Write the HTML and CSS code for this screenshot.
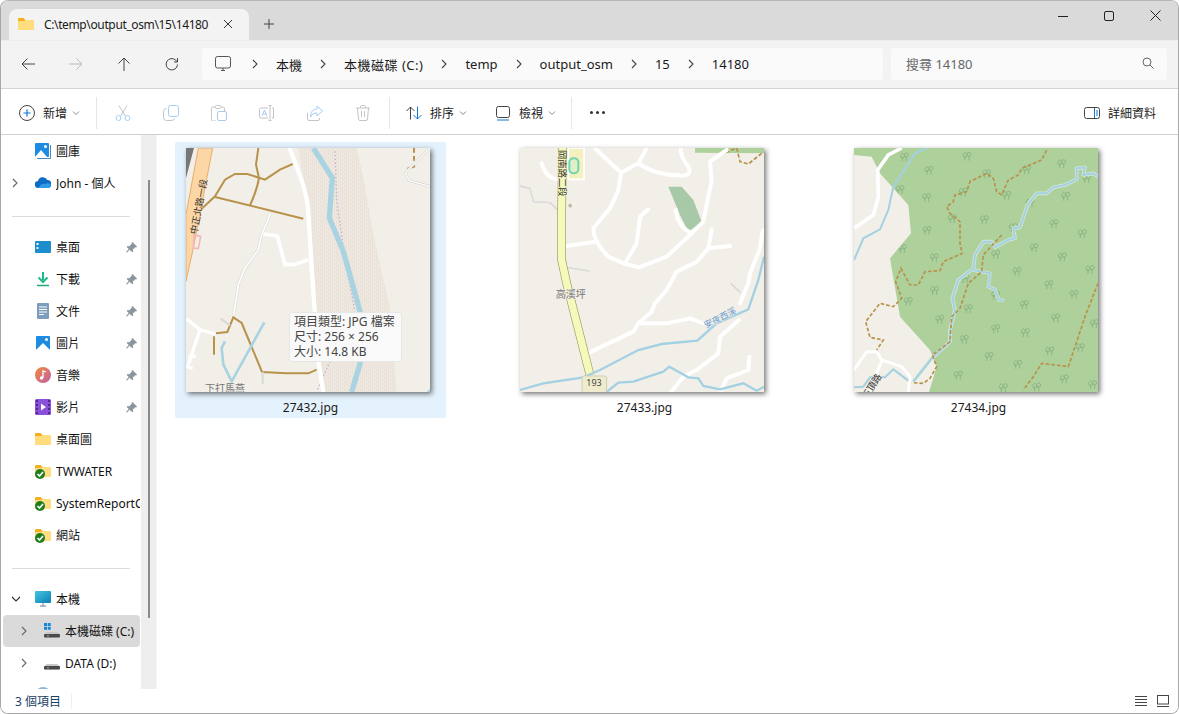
FILE: index.html
```html
<!DOCTYPE html>
<html lang="zh-Hant">
<head>
<meta charset="utf-8">
<title>C:\temp\output_osm\15\14180</title>
<link rel="stylesheet" href="styles.css">
</head>
<body>
<svg class="defs" width="0" height="0" aria-hidden="true">
  <defs>
    <symbol id="i-folder" viewBox="0 0 16 16">
      <path d="M0 3a1 1 0 0 1 1-1h4.500l2 2H15a1 1 0 0 1 1 1v8a1 1 0 0 1-1 1H1a1 1 0 0 1-1-1z" fill="#f2b01e"/>
      <path d="M0 6a1 1 0 0 1 1-1h5l1.500-1H15a1 1 0 0 1 1 1v8a1 1 0 0 1-1 1H1a1 1 0 0 1-1-1z" fill="#ffdc7d"/>
    </symbol>
    <symbol id="i-sync" viewBox="0 0 16 16">
      <use href="#i-folder"/>
      <circle cx="5" cy="11" r="5" fill="#1f7d1f"/>
      <path d="M2.500 11l2 2 3.500-4" fill="none" stroke="#fff" stroke-width="1.600"/>
    </symbol>
    <symbol id="i-pin" viewBox="0 0 12 12">
      <path d="M7 0l5 5-1 1-1-.3-2.500 2.500.3 2-1 1L4 8.500 1 11.500l-1-.5 3-3.500L.7 5.300l1-1 2 .3L6.300 2 6 1z" fill="#8c949c"/>
    </symbol>
    <symbol id="i-chev" viewBox="0 0 8 10">
      <path d="M2 1l4 4-4 4" fill="none" stroke="currentColor" stroke-width="1.100"/>
    </symbol>
    <symbol id="i-drive" viewBox="0 0 16 16">
      <path d="M3 9h10l3 2.500v2a1 1 0 0 1-1 1H1a1 1 0 0 1-1-1v-2z" fill="#c8c8c8"/>
      <rect y="11" width="16" height="3.500" rx="1" fill="#4a4a4a"/>
      <rect x="3" y="12.300" width="2" height="1" fill="#5fdc6a"/>
    </symbol>
    <symbol id="i-tree" viewBox="0 0 30 30">
      <g fill="none" stroke="#86b182" stroke-width="2.600">
        <path d="M9 28V14M21 28V14"/>
        <path d="M9 3C5 6 3 10 3 12a6 6 0 0 0 12 0c0-2-2-6-6-9z"/>
        <circle cx="21" cy="9" r="6"/>
      </g>
    </symbol>
    <pattern id="stipple" width="12" height="12" patternUnits="userSpaceOnUse">
      <circle cx="2" cy="3" r="1.500" fill="#d3c5b6"/>
      <circle cx="8" cy="9" r="1.500" fill="#d3c5b6"/>
    </pattern>
  </defs>
</svg>

<div class="window">
  <header class="titlebar">
    <div class="tab">
      <svg class="ico" width="16" height="16"><use href="#i-folder"/></svg>
      <span class="tab-title">C:\temp\output_osm\15\14180</span>
      <svg class="tab-close" width="10" height="10" viewBox="0 0 10 10"><path d="M1 1l8 8M9 1l-8 8" stroke="#333" fill="none"/></svg>
    </div>
    <svg class="tab-new" width="12" height="12" viewBox="0 0 12 12"><path d="M6 1v10M1 6h10" stroke="#444" fill="none"/></svg>
    <div class="winctl">
      <span class="winbtn"><svg width="10" height="10" viewBox="0 0 10 10"><path d="M0 5.500h10" stroke="#222" fill="none"/></svg></span>
      <span class="winbtn"><svg width="10" height="10" viewBox="0 0 10 10"><rect x=".5" y=".5" width="9" height="9" rx="1.500" stroke="#222" fill="none"/></svg></span>
      <span class="winbtn"><svg width="11" height="11" viewBox="0 0 11 11"><path d="M.5.500l10 10M10.500.5l-10 10" stroke="#222" fill="none"/></svg></span>
    </div>
  </header>

  <div class="addrrow">
    <div class="navbtns">
      <span class="navbtn"><svg width="16" height="16" viewBox="0 0 16 16"><path d="M15 8H2M7.500 2.500L2 8l5.500 5.500" fill="none" stroke="#444"/></svg></span>
      <span class="navbtn"><svg width="16" height="16" viewBox="0 0 16 16"><path d="M1 8h13M8.500 2.500L14 8l-5.500 5.500" fill="none" stroke="#bbb"/></svg></span>
      <span class="navbtn"><svg width="16" height="16" viewBox="0 0 16 16"><path d="M8 15V2M2.500 7.500L8 2l5.500 5.500" fill="none" stroke="#444"/></svg></span>
      <span class="navbtn"><svg width="16" height="16" viewBox="0 0 16 16"><path d="M13.500 8.500a5.700 5.700 0 1 1-1.700-4.300L13.500 6V2M13.500 6H10" fill="none" stroke="#444"/></svg></span>
    </div>
    <div class="address">
      <svg class="pc" width="16" height="16" viewBox="0 0 16 16"><rect x=".5" y=".5" width="15" height="11.500" rx="2" fill="none" stroke="#555"/><path d="M6 14.500h4M8 12v2.500" stroke="#555" fill="none"/></svg>
      <svg class="chev" width="8" height="10"><use href="#i-chev"/></svg><span>本機</span>
      <svg class="chev" width="8" height="10"><use href="#i-chev"/></svg><span class="crumb-wide">本機磁碟 (C:)</span>
      <svg class="chev" width="8" height="10"><use href="#i-chev"/></svg><span>temp</span>
      <svg class="chev" width="8" height="10"><use href="#i-chev"/></svg><span>output_osm</span>
      <svg class="chev" width="8" height="10"><use href="#i-chev"/></svg><span>15</span>
      <svg class="chev" width="8" height="10"><use href="#i-chev"/></svg><span>14180</span>
    </div>
    <div class="search">
      <span>搜尋 14180</span>
      <svg width="12" height="12" viewBox="0 0 12 12"><circle cx="5" cy="5" r="4" fill="none" stroke="#666"/><path d="M8 8l3.500 3.500" stroke="#666" fill="none"/></svg>
    </div>
  </div>

  <div class="toolbar">
    <div class="tool tool-new">
      <svg width="16" height="16" viewBox="0 0 16 16"><circle cx="8" cy="8" r="7.500" fill="none" stroke="#444"/><path d="M8 4.500v7M4.500 8h7" stroke="#0a78d4" stroke-width="1.200" fill="none"/></svg>
      <span>新增</span>
      <svg class="caret" width="8" height="6" viewBox="0 0 8 6"><path d="M1 1.500l3 3 3-3" fill="none" stroke="#888"/></svg>
    </div>
    <span class="sep"></span>
    <div class="disabled">
      <span class="dbtn"><svg width="16" height="16" viewBox="0 0 16 16"><path d="M4 .5l6.500 11M12 .5L5.500 11.500" stroke="#c4c4c4" fill="none"/><circle cx="3.500" cy="13" r="2.500" stroke="#a5cdf2" fill="none"/><circle cx="12.500" cy="13" r="2.500" stroke="#a5cdf2" fill="none"/></svg></span>
      <span class="dbtn"><svg width="16" height="16" viewBox="0 0 16 16"><rect x="5.500" y=".5" width="10" height="11" rx="2" fill="#fff" stroke="#a5cdf2"/><path d="M3.500 3.500A3 3 0 0 0 .5 6.500v6a3 3 0 0 0 3 3h5a3 3 0 0 0 3-2" fill="none" stroke="#c4c4c4"/></svg></span>
      <span class="dbtn"><svg width="16" height="16" viewBox="0 0 16 16"><path d="M4 2H2a1.500 1.500 0 0 0-1.500 1.500v11A1.500 1.500 0 0 0 2 16h3M10 2h2a1.500 1.500 0 0 1 1.500 1.500V6" fill="none" stroke="#c4c4c4"/><rect x="4.500" y=".5" width="5" height="3" rx="1" fill="none" stroke="#c4c4c4"/><rect x="6.500" y="6.500" width="9" height="9" rx="1.500" fill="#fff" stroke="#a5cdf2"/></svg></span>
      <span class="dbtn"><svg width="16" height="16" viewBox="0 0 16 16"><path d="M9 3H2a1.500 1.500 0 0 0-1.500 1.500v7A1.500 1.500 0 0 0 2 13h7M13 3h1.500v10H13M11 1v14M9.500.5h3M9.500 15.500h3" fill="none" stroke="#c4c4c4"/><path d="M3 11l2.500-6 2.500 6M4 9h3" fill="none" stroke="#a5cdf2"/></svg></span>
      <span class="dbtn"><svg width="16" height="16" viewBox="0 0 16 16"><path d="M.5 8v6A1.500 1.500 0 0 0 2 15.500h9a1.500 1.500 0 0 0 1.500-1.500v-1" fill="none" stroke="#c4c4c4"/><path d="M10 1l5.500 5L10 11V8C7 8 5 9 3.500 12 3.500 7 6 4 10 4z" fill="#fff" stroke="#a5cdf2"/></svg></span>
      <span class="dbtn"><svg width="16" height="16" viewBox="0 0 16 16"><path d="M1 3h14M5.500 3V1.500a1 1 0 0 1 1-1h3a1 1 0 0 1 1 1V3M2.500 3l1 11a1.500 1.500 0 0 0 1.500 1.500h6a1.500 1.500 0 0 0 1.500-1.500l1-11M6.500 6v6M9.500 6v6" fill="none" stroke="#c4c4c4"/></svg></span>
    </div>
    <span class="sep sep-b"></span>
    <div class="tool tool-sort">
      <svg width="16" height="16" viewBox="0 0 16 16"><path d="M4.500 14.500V2M.5 6l4-4 4 4" fill="none" stroke="#444"/><path d="M11.500 1.500V14M7.500 10l4 4 4-4" fill="none" stroke="#0a78d4"/></svg>
      <span>排序</span>
      <svg class="caret" width="8" height="6" viewBox="0 0 8 6"><path d="M1 1.500l3 3 3-3" fill="none" stroke="#888"/></svg>
    </div>
    <div class="tool tool-view">
      <svg width="16" height="16" viewBox="0 0 16 16"><rect x="1.500" y="1.500" width="13" height="11" rx="2" fill="none" stroke="#444"/><path d="M2 15h12" stroke="#0a78d4" fill="none"/></svg>
      <span>檢視</span>
      <svg class="caret" width="8" height="6" viewBox="0 0 8 6"><path d="M1 1.500l3 3 3-3" fill="none" stroke="#888"/></svg>
    </div>
    <span class="sep sep-c"></span>
    <div class="more"><i></i><i></i><i></i></div>
    <div class="tool tool-details">
      <svg width="16" height="16" viewBox="0 0 16 16"><rect x=".5" y="2.500" width="15" height="11" rx="2" fill="none" stroke="#444"/><path d="M10.500 3v10" stroke="#0a78d4" fill="none"/><path d="M12 6h2M12 8h2M12 10h2" stroke="#0a78d4" fill="none"/></svg>
      <span>詳細資料</span>
    </div>
  </div>

  <div class="main">
    <nav class="nav">
      <div class="row"><span class="ch"></span>
        <svg class="ico" width="16" height="16" viewBox="0 0 16 16"><rect width="14" height="14" rx="1" fill="#1d8be0"/><path d="M0 14l6-7 6 7z" fill="#fff"/><circle cx="10.500" cy="3.500" r="1.500" fill="#fff"/><path d="M15.500 2v13.500H2" fill="none" stroke="#4a86c0"/></svg>
        <span class="t">圖庫</span></div>
      <div class="row"><span class="ch"><svg width="8" height="10"><use href="#i-chev"/></svg></span>
        <svg class="ico" width="16" height="16" viewBox="0 0 16 16"><path d="M3.500 13a3.500 3.500 0 0 1-.5-7 5 5 0 0 1 9.300-1A4 4 0 0 1 12.500 13z" fill="#0f6cc4"/><path d="M3.500 13C5 9 8 8.500 10 9c3-1.500 6-.5 6 1.500 0 1.500-1.500 2.500-3.500 2.500z" fill="#2f9ae6"/></svg>
        <span class="t">John - 個人</span></div>
      <div class="divider"></div>
      <div class="row"><span class="ch"></span>
        <svg class="ico" width="16" height="16" viewBox="0 0 16 16"><rect y="2" width="16" height="12" rx="1" fill="#1b8ecb"/><rect x="1.500" y="4" width="2" height="2" fill="#fff"/><rect x="1.500" y="8" width="2" height="2" fill="#d8f2ff"/></svg>
        <span class="t">桌面</span><svg class="pin" width="11" height="11"><use href="#i-pin"/></svg></div>
      <div class="row"><span class="ch"></span>
        <svg class="ico" width="16" height="16" viewBox="0 0 16 16"><path d="M8 1v8" stroke="#1fb78d" stroke-width="2" fill="none"/><path d="M3.500 6.500L8 11l4.500-4.500" stroke="#1fb78d" stroke-width="2" fill="none"/><path d="M2 14.500h12" stroke="#1fa87e" stroke-width="1.500" fill="none"/></svg>
        <span class="t">下載</span><svg class="pin" width="11" height="11"><use href="#i-pin"/></svg></div>
      <div class="row"><span class="ch"></span>
        <svg class="ico" width="16" height="16" viewBox="0 0 16 16"><rect x="2" width="12" height="16" rx="1" fill="#7d9dbd"/><path d="M4 4h8M4 6.500h8M4 9h8M4 11.500h5" stroke="#fff" fill="none"/></svg>
        <span class="t">文件</span><svg class="pin" width="11" height="11"><use href="#i-pin"/></svg></div>
      <div class="row"><span class="ch"></span>
        <svg class="ico" width="16" height="16" viewBox="0 0 16 16"><rect x="1" y="1" width="14" height="14" rx="1" fill="#1d8be0"/><path d="M1 15l7-7 7 7z" fill="#fff"/><circle cx="11.500" cy="4.500" r="1.500" fill="#fff"/></svg>
        <span class="t">圖片</span><svg class="pin" width="11" height="11"><use href="#i-pin"/></svg></div>
      <div class="row"><span class="ch"></span>
        <svg class="ico" width="16" height="16" viewBox="0 0 16 16"><defs><linearGradient id="g-music" x1="0" y1="0" x2="1" y2="1"><stop offset="0" stop-color="#ef8a3c"/><stop offset="1" stop-color="#c25fa8"/></linearGradient></defs><circle cx="8" cy="8" r="8" fill="url(#g-music)"/><path d="M8 11V4l3 1" fill="none" stroke="#fff" stroke-width="1.300"/><circle cx="6.500" cy="11" r="1.700" fill="#fff"/></svg>
        <span class="t">音樂</span><svg class="pin" width="11" height="11"><use href="#i-pin"/></svg></div>
      <div class="row"><span class="ch"></span>
        <svg class="ico" width="16" height="16" viewBox="0 0 16 16"><rect width="16" height="16" rx="1.500" fill="#8b4fd8"/><path d="M6 4.500l5 3.500-5 3.500z" fill="#fff"/><path d="M1 2h2M1 6h2M1 10h2M1 14h2M13 2h2M13 6h2M13 10h2M13 14h2" stroke="#3d1d80" stroke-width="1.400" fill="none"/></svg>
        <span class="t">影片</span><svg class="pin" width="11" height="11"><use href="#i-pin"/></svg></div>
      <div class="row"><span class="ch"></span><svg class="ico" width="16" height="16"><use href="#i-folder"/></svg><span class="t">桌面圖</span></div>
      <div class="row"><span class="ch"></span><svg class="ico" width="16" height="16"><use href="#i-sync"/></svg><span class="t">TWWATER</span></div>
      <div class="row"><span class="ch"></span><svg class="ico" width="16" height="16"><use href="#i-sync"/></svg><span class="t">SystemReportCache</span></div>
      <div class="row"><span class="ch"></span><svg class="ico" width="16" height="16"><use href="#i-sync"/></svg><span class="t">網站</span></div>
      <div class="divider"></div>
      <div class="row"><span class="ch"><svg width="10" height="8" viewBox="0 0 10 8"><path d="M1 2l4 4 4-4" fill="none" stroke="#333" stroke-width="1.100"/></svg></span>
        <svg class="ico" width="16" height="16" viewBox="0 0 16 16"><defs><linearGradient id="g-pc" x1="0" y1="0" x2="1" y2="1"><stop offset="0" stop-color="#40c6e0"/><stop offset="1" stop-color="#0f7fb8"/></linearGradient></defs><rect width="16" height="12" rx="1" fill="url(#g-pc)"/><path d="M8 12v2.500M5 15h6" stroke="#9aa5ad" stroke-width="1.300" fill="none"/></svg>
        <span class="t">本機</span></div>
      <div class="row row-sub row-sel"><span class="ch"><svg width="8" height="10"><use href="#i-chev"/></svg></span>
        <svg class="ico" width="16" height="16" viewBox="0 0 16 16"><use href="#i-drive"/><path d="M0 0h3v3H0zM3.700 0h3v3h-3zM0 3.700h3v3H0zM3.700 3.700h3v3h-3z" fill="#1688d8"/></svg>
        <span class="t">本機磁碟 (C:)</span></div>
      <div class="row row-sub"><span class="ch"><svg width="8" height="10"><use href="#i-chev"/></svg></span>
        <svg class="ico" width="16" height="16"><use href="#i-drive"/></svg>
        <span class="t">DATA (D:)</span></div>
      <div class="row"><span class="ch"></span>
        <svg class="ico" width="16" height="16" viewBox="0 0 16 16"><circle cx="8" cy="8" r="8" fill="#8ab8d8"/></svg>
      </div>
    </nav>
    <div class="track"><div class="thumbbar"></div></div>

    <section class="files">
      <figure class="item item-sel">
        <svg class="map" viewBox="48 40 732 732" width="244" height="244">
          <rect x="48" y="40" width="732" height="732" fill="#f2efe9"/>
          <path d="M385 40H560L580 130 610 300 660 520 680 772H465L445 620 430 400 410 200z" fill="#eee8e0"/>
          <path d="M385 40H560L580 130 610 300 660 520 680 772H465L445 620 430 400 410 200z" fill="url(#stipple)"/>
          <path d="M495 50L500 200 530 400 555 530M480 680L440 770" fill="none" stroke="#c8aacb" stroke-width="4" stroke-dasharray="4 7"/>
          <path d="M430 40L487 130 478 250 520 350 570 530 572 680 545 772" fill="none" stroke="#a9d3e0" stroke-width="16"/>
          <path d="M358 40C390 120 410 170 415 230L425 400 435 540 445 680 460 772" fill="none" stroke="#fff" stroke-width="13"/>
          <path d="M48 40H72L48 130z" fill="#777"/>
          <path d="M85 40H128L70 340 48 440V240z" fill="#fcd6a4" stroke="#e6ad6e" stroke-width="3"/>
          <path d="M72 300L92 305 85 342 70 340z" fill="none" stroke="#f5b9b9" stroke-width="5"/>
          <path d="M302 235L275 300 265 345 225 400 205 450 190 545" fill="none" stroke="#dcdcdc" stroke-width="9"/>
          <path d="M302 235L275 300 265 345 225 400 205 450 190 545" fill="none" stroke="#fff" stroke-width="5"/>
          <path d="M280 298L322 304 345 390 370 390 415 375" fill="none" stroke="#fff" stroke-width="11"/>
          <g fill="none" stroke="#b8924a" stroke-width="6">
            <path d="M265 40L258 90 267 130C262 160 250 190 240 212"/>
            <path d="M95 222L135 185 165 135 195 118 232 118 285 135 330 105 368 88"/>
            <path d="M135 187L400 252"/>
            <path d="M138 596L172 592 190 548 215 565 240 625 276 712 350 716 415 716 440 705"/>
            <path d="M132 605V660"/>
            <path d="M712 102L735 95"/>
            <path d="M732 40V95" stroke-dasharray="14 10"/>
          </g>
          <path d="M48 552L90 585 135 598M90 585L55 690M55 665H78M48 695L68 702" fill="none" stroke="#fff" stroke-width="10"/>
          <path d="M152 552L180 572M278 712V748" fill="none" stroke="#d8d8d8" stroke-width="6"/>
          <path d="M780 40L705 115 718 138 780 155" fill="none" stroke="#cfcfcf" stroke-width="7"/>
          <path d="M780 40L705 115 718 138 780 155" fill="none" stroke="#fff" stroke-width="4"/>
          <path d="M283 563L185 740 160 690 155 640 165 620" fill="none" stroke="#a9d3e0" stroke-width="8"/>
          <path d="M770 772L780 762V772z" fill="#a9d3e0"/>
          <text class="m-road m-orange" transform="translate(80 300) rotate(-79)">中正北路一段</text>
          <text class="m-place" x="105" y="773">下打馬燕</text>
        </svg>
        <figcaption>27432.jpg</figcaption>
        <div class="tip">項目類型: JPG 檔案<br>尺寸: 256 × 256<br>大小: 14.8 KB</div>
      </figure>

      <figure class="item">
        <svg class="map" viewBox="30 24 732 732" width="244" height="244">
          <rect x="30" y="24" width="732" height="732" fill="#f2efe9"/>
          <path d="M555 24H762V40L555 38z" fill="#aed09b"/>
          <path d="M630 45L680 24 690 65 715 72 755 40" fill="none" stroke="#b8924a" stroke-width="5" stroke-dasharray="12 6"/>
          <path d="M475 140H515L550 180 575 245 535 275 510 225z" fill="#a8c9a8"/>
          <path d="M175 24H222V118H175z" fill="#f4f0c0" stroke="#fff" stroke-width="5"/>
          <rect x="178" y="55" width="27" height="45" rx="12" fill="#dff0c8" stroke="#72d3ae" stroke-width="6"/>
          <g fill="none" stroke="#fff" stroke-width="12" stroke-linejoin="round" stroke-linecap="round">
            <path d="M95 70C105 105 125 118 150 118"/>
            <path d="M255 24C280 50 310 75 333 98L385 70 410 24"/>
            <path d="M385 70C420 95 470 108 505 105 520 110 550 105 535 80 522 65 512 50 512 24"/>
            <path d="M333 98L325 150 300 205 250 265C250 290 265 320 295 350L340 370 387 382 470 350 545 280 580 245 605 120 600 65 650 30"/>
            <path d="M170 318L255 305"/>
            <path d="M345 370L380 310 390 230 415 208"/>
            <path d="M498 210C500 240 515 265 545 280"/>
            <path d="M605 268L595 325 660 318M595 325L560 365 500 395 470 450 435 490 425 515 385 550 370 575 232 640"/>
            <path d="M385 550L470 550 540 535 580 550"/>
            <path d="M760 270C750 290 760 310 740 350L720 400 715 430 690 490"/>
            <path d="M687 540L630 590 625 640 560 690 520 710 480 760"/>
            <path d="M718 650L715 690 650 715 630 760"/>
          </g>
          <path d="M30 138L60 145 70 185 120 188 150 215M170 382L238 393M662 430L692 458" fill="none" stroke="#c8c8c8" stroke-width="4"/>
          <path d="M30 138L60 145 70 185 120 188 150 215M170 382L238 393M662 430L692 458" fill="none" stroke="#f7f7f7" stroke-width="1.500"/>
          <path d="M158 24L155 200 155 360 170 430 240 705" fill="none" stroke="#9c9c60" stroke-width="26"/>
          <path d="M158 24L155 200 155 360 170 430 240 705" fill="none" stroke="#f6f9bc" stroke-width="22"/>
          <path d="M30 750L100 730 220 712 270 690 385 630 455 612 562 602 620 550 715 508 745 420 762 350" fill="none" stroke="#a3d1e2" stroke-width="7"/>
          <path d="M290 756L325 728 370 725 460 695 478 680 535 712 565 715 580 738 630 748 700 730 740 752 762 740" fill="none" stroke="#a3d1e2" stroke-width="7"/>
          <path d="M180 190l7 7-6 7-7-7z" fill="#c4b3a0"/>
          <rect x="216" y="708" width="74" height="50" rx="7" fill="#efeccd" stroke="#cfcfb0" stroke-width="3"/>
          <text class="m-shield" x="252" y="731">193</text>
          <text class="m-road m-yellow" transform="translate(147 30) rotate(90)">岡南路二段</text>
          <text class="m-place" x="137" y="475">高溪坪</text>
          <text class="m-water" transform="translate(588 565) rotate(-27)">安夜西溪</text>
        </svg>
        <figcaption>27433.jpg</figcaption>
      </figure>

      <figure class="item">
        <svg class="map" viewBox="27 24 732 732" width="244" height="244">
          <rect x="27" y="24" width="732" height="732" fill="#aed09b"/>
          <g>
            <use href="#i-tree" x="163" y="36" width="30" height="30"/><use href="#i-tree" x="351" y="34" width="30" height="30"/><use href="#i-tree" x="635" y="56" width="30" height="30"/>
            <use href="#i-tree" x="237" y="76" width="30" height="30"/><use href="#i-tree" x="410" y="86" width="30" height="30"/><use href="#i-tree" x="530" y="74" width="30" height="30"/>
            <use href="#i-tree" x="710" y="101" width="30" height="30"/><use href="#i-tree" x="150" y="134" width="30" height="30"/><use href="#i-tree" x="340" y="141" width="30" height="30"/>
            <use href="#i-tree" x="230" y="158" width="30" height="30"/><use href="#i-tree" x="647" y="154" width="30" height="30"/><use href="#i-tree" x="470" y="151" width="30" height="30"/>
            <use href="#i-tree" x="540" y="174" width="30" height="30"/><use href="#i-tree" x="307" y="221" width="30" height="30"/><use href="#i-tree" x="403" y="224" width="30" height="30"/>
            <use href="#i-tree" x="231" y="256" width="30" height="30"/><use href="#i-tree" x="612" y="236" width="30" height="30"/><use href="#i-tree" x="490" y="248" width="30" height="30"/>
            <use href="#i-tree" x="697" y="266" width="30" height="30"/><use href="#i-tree" x="157" y="311" width="30" height="30"/><use href="#i-tree" x="552" y="308" width="30" height="30"/>
            <use href="#i-tree" x="253" y="338" width="30" height="30"/><use href="#i-tree" x="437" y="328" width="30" height="30"/><use href="#i-tree" x="637" y="336" width="30" height="30"/>
            <use href="#i-tree" x="501" y="379" width="30" height="30"/><use href="#i-tree" x="720" y="374" width="30" height="30"/><use href="#i-tree" x="345" y="401" width="30" height="30"/>
            <use href="#i-tree" x="597" y="419" width="30" height="30"/><use href="#i-tree" x="254" y="436" width="30" height="30"/><use href="#i-tree" x="437" y="451" width="30" height="30"/>
            <use href="#i-tree" x="672" y="448" width="30" height="30"/><use href="#i-tree" x="175" y="469" width="30" height="30"/><use href="#i-tree" x="523" y="479" width="30" height="30"/>
            <use href="#i-tree" x="355" y="491" width="30" height="30"/><use href="#i-tree" x="617" y="519" width="30" height="30"/><use href="#i-tree" x="269" y="523" width="30" height="30"/>
            <use href="#i-tree" x="437" y="551" width="30" height="30"/><use href="#i-tree" x="733" y="536" width="30" height="30"/><use href="#i-tree" x="526" y="563" width="30" height="30"/>
            <use href="#i-tree" x="343" y="583" width="30" height="30"/><use href="#i-tree" x="599" y="618" width="30" height="30"/><use href="#i-tree" x="691" y="608" width="30" height="30"/>
            <use href="#i-tree" x="417" y="634" width="30" height="30"/><use href="#i-tree" x="503" y="658" width="30" height="30"/><use href="#i-tree" x="325" y="691" width="30" height="30"/>
            <use href="#i-tree" x="643" y="702" width="30" height="30"/><use href="#i-tree" x="560" y="726" width="30" height="30"/><use href="#i-tree" x="460" y="728" width="30" height="30"/>
            <use href="#i-tree" x="728" y="719" width="30" height="30"/>
          </g>
          <path d="M27 45L80 50 105 100 190 195 198 280 135 355 165 530 255 630 275 680 252 756H27z" fill="#f2efe9"/>
          <path d="M27 265L85 225 100 170 98 90 130 45 170 24" fill="none" stroke="#fff" stroke-width="11"/>
          <path d="M27 360L55 295 105 268 130 210 145 140 210 40 245 24" fill="none" stroke="#a3d1e2" stroke-width="6"/>
          <path d="M27 690L65 635 95 635 110 660 170 680 195 710 190 756M110 665L85 720 75 756" fill="none" stroke="#fff" stroke-width="9"/>
          <g fill="none" stroke-linejoin="round">
            <path d="M205 725L260 655 315 605 315 570 330 510 322 475 340 420 385 385 390 345 415 305 440 305 450 322 490 300 510 295 505 265 525 262 548 195 575 160 605 160 625 142 660 135 695 118 695 85 720 82 715 105 745 100 759 110" stroke="#d4e6d8" stroke-width="11"/>
            <path d="M385 390L435 400 430 440 450 448 462 480 478 482" stroke="#d4e6d8" stroke-width="10"/>
            <path d="M205 725L260 655 315 605 315 570 330 510 322 475 340 420 385 385 390 345 415 305 440 305 450 322 490 300 510 295 505 265 525 262 548 195 575 160 605 160 625 142 660 135 695 118 695 85 720 82 715 105 745 100 759 110" stroke="#a3d1e2" stroke-width="6"/>
            <path d="M385 390L435 400 430 440 450 448 462 480 478 482" stroke="#a3d1e2" stroke-width="6"/>
            <path d="M27 742L55 740 75 712 120 712 145 688 190 722" stroke="#a3d1e2" stroke-width="6"/>
          </g>
          <g fill="none" stroke="#b8924a" stroke-width="5" stroke-dasharray="11 6">
            <path d="M605 30L590 60 530 85 520 105 490 120 470 165 455 155 445 115 425 100 375 125 365 155 330 165 325 185 305 200 315 220 345 245 345 310 352 340 295 365 285 392 240 395 220 435 195 435 168 385 152 425 170 475 145 500 105 490 62 545 75 592 115 600 95 630"/>
            <path d="M470 285L415 345 410 395 370 430 345 505 320 530 315 605 262 645 275 680 255 715 235 730 200 728"/>
            <path d="M759 430L720 530 670 680 590 670 565 710 535 750"/>
          </g>
          <text class="m-road" transform="translate(66 780) rotate(-58)">石頂路</text>
        </svg>
        <figcaption>27434.jpg</figcaption>
      </figure>
    </section>
  </div>

  <footer class="status">
    <span class="count">3 個項目</span>
    <span class="status-sep"></span>
    <div class="viewbtns">
      <svg width="12" height="11" viewBox="0 0 12 11"><path d="M0 .5h12M0 3.500h12M0 6.500h12M0 9.500h12" stroke="#444" fill="none"/></svg>
      <svg width="12" height="12" viewBox="0 0 12 12"><rect x=".5" y=".5" width="11" height="8.500" fill="none" stroke="#444"/><path d="M0 11.500h12" stroke="#444" fill="none"/></svg>
    </div>
  </footer>
</div>
</body>
</html>
```

FILE: styles.css
```css
* { box-sizing: border-box; }
html, body { margin: 0; height: 100%; background: #fff; overflow: hidden; }
body {
  font-family: "Noto Sans", "Noto Sans CJK TC", sans-serif;
  font-size: 12px;
  color: #1a1a1a;
}
.defs { position: absolute; }
svg { display: block; flex: none; }

.window {
  width: 1179px;
  height: 714px;
  display: flex;
  flex-direction: column;
  background: #fff;
  border: 1px solid #a8a8a8;
  border-top-color: #b5b5b5;
  border-radius: 8px;
  overflow: hidden;
}

.titlebar {
  height: 39px;
  flex: none;
  display: flex;
  align-items: flex-end;
  background: #dadada;
  padding-left: 8px;
}
.tab {
  width: 240px;
  height: 31px;
  background: #f3f3f3;
  border-radius: 8px 8px 0 0;
  display: flex;
  align-items: center;
  padding-left: 9px;
  padding-bottom: 1px;
}
.tab-title { margin-left: 10px; width: 164px; white-space: nowrap; letter-spacing: -.37px; }
.tab-close { margin-left: 15px; }
.tab-new { margin: 0 0 10px 14px; }
.winctl { margin-left: auto; display: flex; align-self: stretch; align-items: center; }
.winbtn { width: 46px; display: flex; justify-content: center; margin-top: -10px; }

.addrrow {
  height: 49px;
  flex: none;
  display: flex;
  align-items: center;
  background: #f3f3f3;
  border-bottom: 1px solid #d4d4d4;
  padding: 0 11px 1px 3px;
  border-top: 1px solid #ececec;
}
.navbtns { display: flex; }
.navbtn { width: 48px; display: flex; justify-content: center; }
.address {
  margin-left: 6px;
  width: 681px;
  height: 32px;
  background: #fafafa;
  border-radius: 4px;
  display: flex;
  align-items: center;
  gap: 17px;
  padding-left: 13px;
  font-size: 13px;
  white-space: nowrap;
}
.pc { margin-right: 3px; }
.crumb-wide { letter-spacing: .5px; }
.chev { color: #444; }
.search {
  margin-left: 8px;
  width: 276px;
  height: 32px;
  background: #fafafa;
  border-radius: 4px;
  display: flex;
  align-items: center;
  justify-content: space-between;
  padding: 0 13px 2px 15px;
  font-size: 13px;
  color: #666;
}

.toolbar {
  height: 46px;
  flex: none;
  display: flex;
  align-items: center;
  padding: 2px 0 0 7px;
  border-bottom: 1px solid #cfcfcf;
  background: #fff;
}
.tool { display: flex; align-items: center; gap: 8px; height: 32px; }
.caret { margin-left: -3px; }
.tool-new { width: 80px; padding-left: 11px; }
.sep { width: 1px; height: 32px; background: #e6e6e6; margin-left: 8px; flex: none; }
.disabled { display: flex; margin-left: 2px; }
.dbtn { width: 48px; display: flex; justify-content: center; }
.sep-b { margin-left: 2px; }
.tool-sort { width: 88px; margin-left: 8px; padding-left: 8px; }
.tool-view { width: 77px; padding-left: 9px; }
.sep-c { margin-left: 8px; }
.more { width: 48px; margin-left: 1px; display: flex; justify-content: center; gap: 3px; }
.more i { width: 3px; height: 3px; border-radius: 50%; background: #333; }
.tool-details { margin-left: auto; padding-right: 22px; }

.main { flex: 1; min-height: 0; display: flex; }
.nav { width: 140px; flex: none; overflow: hidden; }
.row {
  height: 32px;
  display: flex;
  align-items: center;
  margin: 0 1px 0 2px;
  white-space: nowrap;
  overflow: hidden;
  color: #111;
}
.ch { width: 32px; flex: none; padding-left: 8px; color: #666; }
.row .t { margin-left: 5px; flex: 1; min-width: 0; overflow: hidden; }
.pin { margin-right: 3px; flex: none; }
.row-sub { padding-left: 9px; }
.row-sel { background: #dadada; border-radius: 4px; }
.divider { height: 1px; background: #dcdcdc; margin: 17px 11px 15px 11px; }
.divider + .row { margin-top: -1px; }

.track {
  width: 16px;
  flex: none;
  background: #eeeeee;
  padding: 45px 0 0 7px;
  border-right: 1px solid #f6f6f6;
}
.thumbbar { width: 2px; height: 438px; background: #8a8a8a; }

.files {
  flex: 1;
  display: flex;
  align-items: flex-start;
  gap: 63px;
  padding: 7px 0 0 18px;
}
.item {
  position: relative;
  margin: 0;
  width: 271px;
  height: 276px;
  padding: 6px 16px 0 11px;
  border-radius: 2px;
}
.item-sel { background: #e4f2fd; }
.map { box-shadow: 2px 2px 5px rgba(0, 0, 0, .55); }
figcaption { text-align: center; margin: 7px -16px 0 -11px; line-height: 18px; }

.tip {
  position: absolute;
  left: 114px;
  top: 170px;
  width: 113px;
  height: 50px;
  padding: 1px 4px;
  background: #f9f9f9;
  border: 1px solid #e6e6e6;
  border-radius: 3px;
  line-height: 15px;
  color: #444;
  white-space: nowrap;
}

.m-road { font-family: "Noto Sans CJK TC", sans-serif; font-size: 28px; fill: #333; stroke: #f2efe9; stroke-width: 3px; paint-order: stroke; }
.m-orange { stroke: #fcd6a4; }
.m-yellow { stroke: #f6f9bc; }
.m-place { font-family: "Noto Sans CJK TC", sans-serif; font-size: 30px; fill: #777; stroke: #f2efe9; stroke-width: 3px; paint-order: stroke; }
.m-water { font-family: "Noto Sans CJK TC", sans-serif; font-size: 26px; fill: #6b9ccf; stroke: #f2efe9; stroke-width: 3px; paint-order: stroke; }
.m-shield { font-family: "Noto Sans", sans-serif; font-size: 27px; fill: #444; text-anchor: middle; dominant-baseline: middle; }

.status {
  height: 24px;
  flex: none;
  display: flex;
  align-items: center;
  padding-left: 14px;
  background: #fff;
  position: relative;
}
.count { width: 56px; color: #1d3f66; white-space: nowrap; }
.status-sep { width: 1px; height: 16px; background: #eeeeee; }
.viewbtns { margin-left: auto; display: flex; align-items: center; gap: 10px; padding-right: 9px; }
```
